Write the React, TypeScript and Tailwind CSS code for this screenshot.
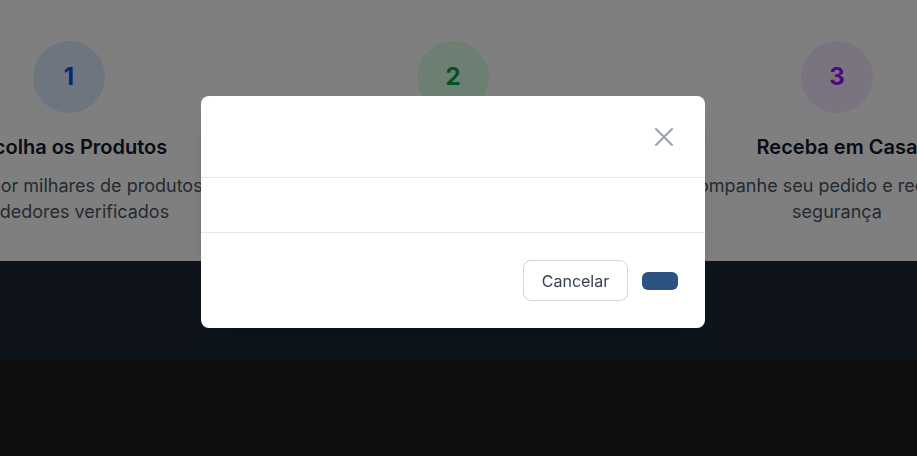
import { useState } from "react";

const steps = [
  {
    n: "1",
    title: "Escolha os Produtos",
    text: "Navegue por milhares de produtos de vendedores verificados",
    circle: "bg-blue-100 text-blue-700",
  },
  {
    n: "2",
    title: "Pague com Segurança",
    text: "Pagamento protegido e dinheiro liberado só após a entrega",
    circle: "bg-green-100 text-green-600",
  },
  {
    n: "3",
    title: "Receba em Casa",
    text: "Acompanhe seu pedido e receba com segurança",
    circle: "bg-purple-100 text-purple-600",
  },
];

export default function App() {
  const [open, setOpen] = useState(true);

  return (
    <div className="relative min-h-[456px] bg-[#1c1c1c] font-['Inter',sans-serif]">
      <section className="overflow-hidden bg-white pt-[41px] pb-[36px]">
        <div className="flex justify-center pr-[11px]">
          <div className="grid w-[1120px] shrink-0 grid-cols-3 gap-8">
            {steps.map((s) => (
              <div key={s.n} className="flex flex-col items-center text-center">
                <div
                  className={`mb-5 flex h-[72px] w-[72px] items-center justify-center rounded-full text-2xl font-bold ${s.circle}`}
                >
                  {s.n}
                </div>
                <h3 className="text-xl font-semibold text-gray-900">{s.title}</h3>
                <p className="mt-3 max-w-[340px] text-lg leading-[26px] text-gray-600">
                  {s.text}
                </p>
              </div>
            ))}
          </div>
        </div>
      </section>

      <section className="h-[99px] bg-gray-800" />

      {open && (
        <div className="fixed inset-0 flex justify-center bg-black/50 pt-24 pr-[11px]">
          <div className="h-fit w-[504px] rounded-lg bg-white shadow-xl">
            <div className="flex h-[81px] items-center justify-end pr-[25px]">
              <button
                onClick={() => setOpen(false)}
                className="flex h-8 w-8 items-center justify-center text-gray-400"
              >
                <svg width="18" height="18" viewBox="0 0 18 18" fill="none">
                  <path
                    d="M1 1L17 17M17 1L1 17"
                    stroke="currentColor"
                    strokeWidth="2"
                    strokeLinecap="round"
                  />
                </svg>
              </button>
            </div>
            <div className="h-[56px] border-y border-gray-200" />
            <div className="flex items-center justify-end gap-[14px] py-[27px] pr-[27px]">
              <button
                onClick={() => setOpen(false)}
                className="h-[41px] w-[105px] rounded-lg border border-gray-300 text-base text-gray-700"
              >
                Cancelar
              </button>
              <button className="h-[18px] w-9 rounded-md bg-[#2c5282]" />
            </div>
          </div>
        </div>
      )}
    </div>
  );
}
